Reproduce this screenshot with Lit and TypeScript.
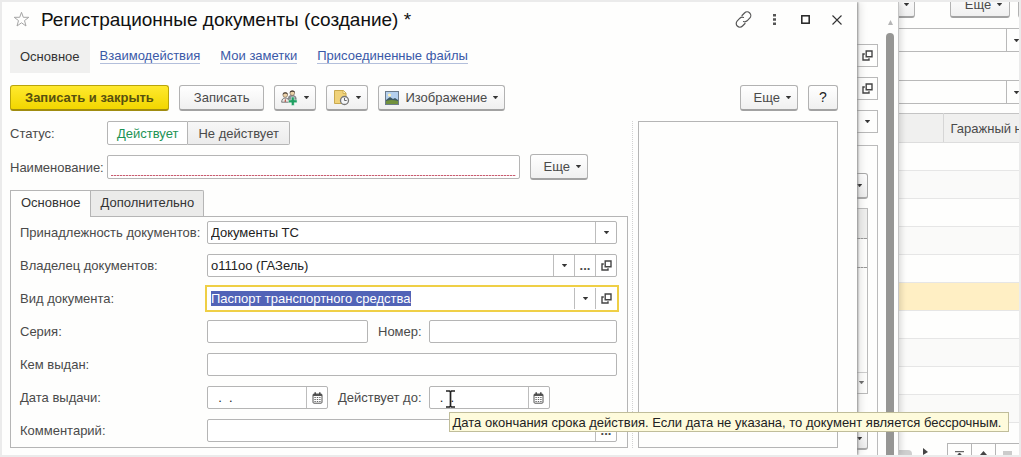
import { LitElement, html, svg, css } from "lit";
import { customElement, state, query } from "lit/decorators.js";

const caret = html`<svg class="caret" width="5" height="3" viewBox="0 0 5 3" aria-hidden="true"><path d="M0 0h5L2.500 3z" fill="#333" stroke="#333" stroke-width=".4" /></svg>`;

const openIcon = html`<svg width="11" height="11" viewBox="0 0 11 11" aria-hidden="true">
  <path d="M4.2 1h5.8v5.8H4.2z M2.8 4H1v6h6V8.2" fill="none" stroke="#444" stroke-width="1.4" />
</svg>`;

const calendarIcon = html`<svg width="11" height="12" viewBox="0 0 11 12" aria-hidden="true">
  <rect x="1" y="2" width="9" height="9.2" rx="1" fill="none" stroke="#555" />
  <path d="M1 2h9v2H1z" fill="#555" />
  <path d="M3.2 0.3v2.4M7.8 0.3v2.4" stroke="#444" stroke-width="1.4" />
  ${[5.5, 7.5, 9.5].map((y) => svg`<path d="M2.4 ${y}h1.4M4.8 ${y}h1.4M7.2 ${y}h1.4" stroke="#666" />`)}
</svg>`;

const peopleIcon = html`<svg width="17" height="17" viewBox="0 0 18 17" aria-hidden="true">
  <path d="M8 9c0-2 1.500-3 3.500-3s4.500 1 4.500 3.500V11H8z" fill="#8a9298" stroke="#555" stroke-width=".6" />
  <circle cx="12" cy="3.800" r="2.500" fill="#ecd2a8" stroke="#6b5b45" stroke-width=".6" />
  <path d="M9.300 3.500C9 .3 15 .3 14.700 3.500 13.500 2 10.800 2 9.300 3.500z" fill="#4b4038" />
  <path d="M.7 13.500c0-3 1.500-4.500 3.800-4.500s4.200 1.500 4.200 4.500z" fill="#e8e8e6" stroke="#555" stroke-width=".8" />
  <path d="M4.500 9.200l-.8 3.800h1.800z" fill="#b34a3a" />
  <circle cx="4.500" cy="5.800" r="2.500" fill="#ecd2a8" stroke="#6b5b45" stroke-width=".6" />
  <path d="M1.900 5.500C1.500 2.200 7.500 2.200 7.100 5.500 6 4 3.200 4 1.900 5.500z" fill="#4b4038" />
  <path d="M11 8h3v3h3v3h-3v3h-3v-3H8v-3h3z" fill="#1fa062" stroke="#fff" stroke-width=".5" />
</svg>`;

const fileClockIcon = html`<svg width="17" height="17" viewBox="0 0 17 17" aria-hidden="true">
  <path d="M1.500 1.500h9l2.500 2.500v10.500H1.500z" fill="#f0d27a" stroke="#c9a94e" />
  <path d="M10 1.500V4.500h3" fill="#fbeebb" stroke="#c9a94e" stroke-width=".8" />
  <circle cx="11.500" cy="11.500" r="4" fill="#f4f6f8" stroke="#777" stroke-width="1.300" />
  <path d="M11.500 9v2.500h2.200" fill="none" stroke="#666" />
</svg>`;

const pictureIcon = html`<svg width="14" height="14" viewBox="0 0 14 14" aria-hidden="true">
  <rect x=".5" y=".5" width="13" height="13" fill="#b5d0ee" stroke="#6c7c8c" />
  <circle cx="4.500" cy="4" r="1.600" fill="#fff2b8" />
  <path d="M1 9l4-3 3 2 2-1 3 2v2H1z" fill="#3f5a63" />
  <path d="M1 10c4-1.500 8-1 12 0v3H1z" fill="#71913d" />
</svg>`;

@customElement("app-root")
export class AppRoot extends LitElement {
  @state() private status = "active";
  @query("#kind") private kind!: HTMLInputElement;

  static styles = css`
    :host {
      display: grid;
      grid-template-columns: minmax(0, 1fr) 42px 11.8%;
      min-height: 100vh;
      box-sizing: border-box;
      padding: 2px;
      background: #ebebeb;
      color: #4a4a4a;
      font: 13px/15px "Liberation Sans", Arial, sans-serif;
      overflow: hidden;
    }
    *, *::before { box-sizing: border-box; }
    button, input { font: inherit; color: inherit; margin: 0; }
    svg { display: block; flex: none; }

    .dialog {
      position: relative;
      z-index: 2;
      background: #fefefd;
      padding: 0 19px 7px 8px;
      box-shadow: 1px 0 2px #8f8f8f, 3px 0 8px rgba(0, 0, 0, 0.12);
      clip-path: inset(0 -200px 0 0);
    }
    .head { display: flex; align-items: center; height: 35px; padding-left: 3px; }
    .title { flex: 1; margin: 0 0 0 11px; font-size: 19px; line-height: 24px; font-weight: 400; color: #111; white-space: nowrap; }
    .tools { display: flex; gap: 14px; margin-right: -7px; }
    .icon { display: grid; place-items: center; width: 17px; height: 20px; border: 0; padding: 0; background: none; }

    .nav { display: flex; align-items: center; gap: 20px; margin-top: 3px; height: 33px; }
    .nav .current { padding: 9px 10px; margin-right: -10px; background: #f0f0ef; color: #333; }
    .nav a { color: #3a59a8; text-decoration: none; border-bottom: 1px solid #b3bfdb; line-height: 14px; }

    .bar { display: flex; gap: 10px; margin: 12px 0 10px; }
    .btn {
      display: inline-flex; align-items: center; justify-content: center; gap: 6px;
      height: 26px; padding: 0 6px 0 13px; border: 1px solid #b2b2b2; border-bottom: 2px solid #a2a2a2;
      border-radius: 3px; background: linear-gradient(#fff, #f0f0f0); white-space: nowrap;
    }
    .btn.plain { padding: 0 14px; }
    .btn.pic { padding: 0 6px; }
    .btn.primary { padding: 0 14px; font-weight: 700; color: #57500f; background: linear-gradient(#ffe92e, #f2d600); border-color: #b9a40b; border-bottom-color: #a08c10; }
    .btn.help { width: 30px; padding: 0; color: #222; font-size: 14px; }
    .grow { flex: 1; }

    .body { display: flex; }
    .main { flex: 1; min-width: 0; }
    .split { width: 10px; border-left: 1px dotted #d2d2d2; margin-left: 4px; margin-right: -4px; }
    .preview { width: 200px; border: 1px solid #b5b5b5; }

    .line { display: flex; align-items: center; height: 24px; }
    .line > .cap { width: 97px; flex: none; white-space: nowrap; }
    .name { margin: 9px 40px 10px 0; height: 26px; }
    .name .field { margin-right: 10px; height: 24px; }

    .seg { display: flex; height: 24px; border: 0; padding: 0; margin: 0; }
    .seg label {
      position: relative; display: flex; align-items: center; padding: 0 10px; border: 1px solid #b5b5b5;
      background: linear-gradient(#f7f7f7, #ececec);
    }
    .seg label + label { border-left: 0; border-radius: 0 2px 2px 0; }
    .seg label:first-child { border-radius: 2px 0 0 2px; padding: 0 9px; }
    .seg label.on { background: #fff; color: #1d9355; }
    .seg input { position: absolute; inset: 0; appearance: none; }

    .tabs { display: flex; }
    .tab { height: 26px; padding: 0 9px 2px 10px; border: 1px solid #b5b5b5; border-bottom: 0; background: #ebebea; color: #333; position: relative; }
    .tab + .tab { border-left: 0; border-radius: 0 2px 0 0; }
    .tab.on { background: #fefefd; margin-bottom: -1px; z-index: 1; height: 27px; padding-bottom: 3px; }
    .panel { border: 1px solid #b5b5b5; padding: 4px 10px 5px 9px; display: grid; gap: 10px; }
    .row { display: flex; align-items: center; height: 23px; white-space: nowrap; }
    .row > .cap { width: 187px; flex: none; }
    .row > .mid { margin: 0 7px 0 10px; }

    .field { flex: 1; min-width: 0; display: flex; height: 23px; border: 1px solid #b5b5b5; border-radius: 2px; background: #fff; position: relative; }
    .field input { flex: 1; min-width: 0; width: 0; border: 0; outline: 0; padding: 0 3px; background: none; color: #222; }
    .field button { display: grid; place-items: center; width: 21px; flex: none; padding: 0; border: 0; border-left: 1px solid #bdbdbd; background: none; line-height: 12px; font-weight: 700; }
    .field.required::before { content: ""; position: absolute; left: 3px; right: 3px; bottom: 2px; height: 1px; background: repeating-linear-gradient(90deg, #c95c70 0 2px, #eccdd2 2px 3px); }
    .field.focus { outline: 2px solid #efcf45; border-color: #fff; border-radius: 0; }
    .field.serial { flex: 0 0 161px; }
    .field.date { flex: 0 0 121px; }
    .field input::selection { background: #5163b7; color: #fff; }

    .tip { position: absolute; left: 19px; top: 25px; z-index: 3; padding: 2px 7px 2px 3px; height: 20px; border: 1px solid #c0bd9a; background: #fefbdc; color: #222; white-space: nowrap; }
    .beam { position: absolute; left: 15px; top: 3px; z-index: 4; }

    .behind { position: relative; z-index: 1; min-width: 0; display: flex; background: #fefefd; border-right: 1px solid #c4c4c4; box-shadow: 2px 0 6px rgba(0, 0, 0, 0.15); clip-path: inset(0 -12px 0 0); }
    .edge { width: 21px; display: flex; flex-direction: column; padding-top: 42px; }
    .cell { display: grid; place-items: center; height: 23px; margin-bottom: 10px; padding: 0; border: 1px solid #b9b9b9; border-left: 0; background: none; flex: none; }
    .group { flex: 1; margin-top: 2px; padding: 27px 9px 0 0; border: 1px solid #bbb; border-width: 1px 1px 0 0; display: flex; flex-direction: column; }
    .stub { height: 26px; flex: none; border: 1px solid #aaa; border-bottom-width: 2px; border-left: 0; border-radius: 0 3px 3px 0; background: linear-gradient(#fff, #eee); padding: 0; }
    .stub.low { height: 22px; }
    .grid { height: 186px; margin: 9px 0 34px; border: 1px solid #bbb; border-left: 0; display: flex; flex-direction: column; }
    .grid i { display: block; height: 29px; border-bottom: 1px dashed #999; }
    .grid .top { background: #efefee; height: 30px; }
    .grid .end { margin-top: auto; height: 21px; border-top: 1px solid #bbb; border-bottom: 0; padding: 8px 0 0 2px; opacity: 0.7; }
    .scroll { display: flex; flex-direction: column; align-items: center; width: 8px; margin-left: 8px; padding-top: 18px; }
    .thumb { flex: 1; width: 8px; margin-top: 8px; border-radius: 4px 4px 0 0; background: #969694; }

    .list { min-width: 0; overflow: hidden; background: #fefefd; display: flex; flex-direction: column; }
    .clip { display: flex; align-items: flex-end; height: 16px; margin-bottom: 10px; overflow: hidden; flex: none; }
    .clip .btn { flex: none; }
    .clip .first { width: 16px; padding: 0; border-left: 0; border-radius: 0 3px 3px 0; margin-right: 35px; }
    .clip .more { width: 60px; margin-right: 8px; }
    .search { display: flex; justify-content: flex-end; height: 24px; border: 1px solid #b9b9b9; border-width: 1px 0; margin-bottom: 28px; flex: none; }
    .search input { flex: 1; min-width: 0; border: 0; background: none; padding: 0 3px; }
    .search button { width: 13px; border: 0; border-left: 1px solid #b9b9b9; padding: 0 0 0 7px; background: none; overflow: hidden; }
    .search.second { margin-bottom: 9px; }
    table { border-collapse: collapse; width: 100%; table-layout: fixed; border-top: 1px solid #c4c4c4; }
    th { height: 29px; padding: 0 0 0 7px; background: #f0f0ef; text-align: left; font-weight: 400; white-space: nowrap; overflow: hidden; border-bottom: 1px solid #ddd; }
    th:first-child { width: 44px; border-right: 1px solid #d6d6d6; }
    td { height: 28px; padding: 0; border-bottom: 1px solid #e6e6e6; }
    tr.alt td { background: #fafaf9; }
    tr.sel td { background: #ffefc4; }
    .foot { display: flex; align-items: flex-end; height: 12px; margin-top: auto; overflow: hidden; flex: none; }
    .foot .hbar { width: 18px; height: 5px; background: #cfcfcf; border-radius: 0 4px 0 0; margin-right: 11px; }
    .foot .hnext { margin-right: 19px; }
    .foot button { width: 24px; height: 12px; flex: none; padding: 7px 0 0; border: 1px solid #b5b5b5; border-width: 1px 0 0 1px; background: none; display: grid; place-items: start center; }
  `;

  firstUpdated() {
    this.kind.focus();
    this.kind.select();
  }

  private drop(label: string) {
    return html`<button aria-label=${label}>${caret}</button>`;
  }

  render() {
    return html`
      <main class="dialog">
        <header class="head">
          <button class="icon" aria-label="В избранное">
            <svg width="17" height="17" viewBox="0 0 17 17"><path d="M8.500 1.300l1.800 5h5.500l-4.300 3.300 1.500 5.400-4.500-3.200L4 15l1.500-5.400L1.200 6.300h5.500z" fill="none" stroke="#a5a5a5" /></svg>
          </button>
          <h1 class="title">Регистрационные документы (создание) *</h1>
          <div class="tools">
            <button class="icon" aria-label="Ссылка">
              <svg width="17" height="17" viewBox="0 0 17 17"><g fill="none" stroke="#555" stroke-width="1.200" stroke-linecap="round"><path d="M7 4.500l2.500-2.500a3.600 3.600 0 0 1 5.200 5.200l-2.600 2.600a3.400 3.400 0 0 1-3.600.7" /><path d="M10 12.500l-2.500 2.500a3.600 3.600 0 0 1-5.200-5.200l2.600-2.600a3.400 3.400 0 0 1 3.600-.7" /></g></svg>
            </button>
            <button class="icon" aria-label="Меню"><svg width="3" height="11" viewBox="0 0 3 11"><path d="M0 0h3v2.500H0zM0 4.200h3v2.500H0zM0 8.500h3V11H0z" fill="#555" /></svg></button>
            <button class="icon" aria-label="Развернуть"><svg width="9" height="9" viewBox="0 0 9 9"><rect x=".8" y=".8" width="7.400" height="7.400" fill="none" stroke="#222" stroke-width="1.500" /></svg></button>
            <button class="icon" aria-label="Закрыть"><svg width="10" height="10" viewBox="0 0 10 10"><path d="M.5.5l9 9M9.500.5l-9 9" stroke="#333" stroke-width="1.100" /></svg></button>
          </div>
        </header>

        <nav class="nav">
          <span class="current">Основное</span>
          <a href="#interactions">Взаимодействия</a>
          <a href="#notes">Мои заметки</a>
          <a href="#files">Присоединенные файлы</a>
        </nav>

        <div class="bar">
          <button class="btn primary">Записать и закрыть</button>
          <button class="btn plain">Записать</button>
          <button class="btn pic" aria-label="Контакты">${peopleIcon}${caret}</button>
          <button class="btn pic" aria-label="Файлы">${fileClockIcon}${caret}</button>
          <button class="btn pic">${pictureIcon}<span>Изображение</span>${caret}</button>
          <span class="grow"></span>
          <button class="btn">Еще ${caret}</button>
          <button class="btn help">?</button>
        </div>

        <div class="body">
          <section class="main">
            <div class="line">
              <span class="cap" id="st">Статус:</span>
              <fieldset class="seg" aria-labelledby="st">
                ${[["active", "Действует"], ["inactive", "Не действует"]].map(
                  ([id, text]) => html`<label class=${this.status === id ? "on" : ""}>
                    <input type="radio" name="status" .checked=${this.status === id} @change=${() => (this.status = id)} />${text}
                  </label>`
                )}
              </fieldset>
            </div>
            <div class="line name">
              <label class="cap" for="name">Наименование:</label>
              <div class="field required"><input id="name" /></div>
              <button class="btn">Еще ${caret}</button>
            </div>

            <div class="tabs" role="tablist">
              <button class="tab on" role="tab" aria-selected="true">Основное</button>
              <button class="tab" role="tab" aria-selected="false">Дополнительно</button>
            </div>
            <div class="panel" role="tabpanel">
              <div class="row">
                <label class="cap" for="belongs">Принадлежность документов:</label>
                <div class="field"><input id="belongs" value="Документы ТС" />${this.drop("Выбрать принадлежность")}</div>
              </div>
              <div class="row">
                <label class="cap" for="owner">Владелец документов:</label>
                <div class="field"><input id="owner" value="о111оо (ГАЗель)" />${this.drop("Выбрать владельца")}<button>...</button><button aria-label="Открыть владельца">${openIcon}</button></div>
              </div>
              <div class="row">
                <label class="cap" for="kind">Вид документа:</label>
                <div class="field focus"><input id="kind" value="Паспорт транспортного средства" />${this.drop("Выбрать вид")}<button aria-label="Открыть вид">${openIcon}</button></div>
              </div>
              <div class="row">
                <label class="cap" for="series">Серия:</label>
                <div class="field serial"><input id="series" /></div>
                <label class="mid" for="number">Номер:</label>
                <div class="field"><input id="number" /></div>
              </div>
              <div class="row">
                <label class="cap" for="issuer">Кем выдан:</label>
                <div class="field"><input id="issuer" /></div>
              </div>
              <div class="row">
                <label class="cap" for="issued">Дата выдачи:</label>
                <div class="field date"><input id="issued" value=${"\u00a0\u00a0.\u00a0\u00a0."} /><button aria-label="Календарь">${calendarIcon}</button></div>
                <label class="mid" for="until">Действует до:</label>
                <div class="field date">
                  <input id="until" value=${"\u00a0\u00a0.\u00a0\u00a0."} aria-describedby="tip" /><button aria-label="Календарь">${calendarIcon}</button>
                  <svg class="beam" width="11" height="18" viewBox="0 0 11 18" aria-hidden="true"><path d="M1 1h3.500l1 1 1-1H10M5.500 2v14M1 17h3.500l1-1 1 1H10" fill="none" stroke="#222" stroke-width="1.700" /></svg>
                  <div class="tip" id="tip" role="tooltip">Дата окончания срока действия. Если дата не указана, то документ является бессрочным.</div>
                </div>
              </div>
              <div class="row">
                <label class="cap" for="comment">Комментарий:</label>
                <div class="field"><input id="comment" /><button>...</button></div>
              </div>
            </div>
          </section>
          <div class="split"></div>
          <aside class="preview"></aside>
        </div>
      </main>

      <section class="behind">
        <div class="edge">
          <button class="cell" aria-label="Открыть">${openIcon}</button>
          <button class="cell" aria-label="Открыть">${openIcon}</button>
          <button class="cell" aria-label="Выбрать">${caret}</button>
          <div class="group">
            <button class="stub" aria-label="Еще">${caret}</button>
            <div class="grid"><i class="top"></i><i></i><i class="end">${caret}</i></div>
            <button class="stub low" aria-label="Еще">${caret}</button>
          </div>
        </div>
        <div class="scroll">
          <svg width="5" height="5" viewBox="0 0 5 5"><path d="M0 5h5L2.500 0z" fill="#b5b5b5" /></svg>
          <div class="thumb"></div>
        </div>
      </section>

      <section class="list">
        <div class="clip">
          <button class="btn first" aria-label="Поиск">${caret}</button>
          <button class="btn more">Еще ${caret}</button>
          <button class="btn help" aria-label="Справка"></button>
        </div>
        <div class="search"><input aria-label="Организация" /><button aria-label="Выбрать">${caret}</button></div>
        <div class="search second"><input aria-label="Подразделение" /><button aria-label="Выбрать">${caret}</button></div>
        <table>
          <thead><tr><th></th><th>Гаражный номер</th></tr></thead>
          <tbody>
            ${["", "alt", "", "alt", "", "sel", "", "alt", "", "alt"].map((c) => html`<tr class=${c}><td></td><td></td></tr>`)}
          </tbody>
        </table>
        <div class="foot">
          <span class="hbar"></span>
          <svg class="hnext" width="5" height="7" viewBox="0 0 5 7"><path d="M0 0l5 4-5 3z" fill="#444" /></svg>
          <button aria-label="В начало"><svg width="9" height="6" viewBox="0 0 9 6"><path d="M0 .7h9M4.500 2L8 6H1z" stroke="#444" fill="#444" /></svg></button>
          <button aria-label="Вверх"><svg width="7" height="4" viewBox="0 0 7 4"><path d="M3.500 0L7 4H0z" fill="#444" /></svg></button>
          <button aria-label="Вниз"><svg width="9" height="4" viewBox="0 0 9 4"><path d="M0 1h9M0 3h9" stroke="#999" /></svg></button>
        </div>
      </section>
    `;
  }
}
